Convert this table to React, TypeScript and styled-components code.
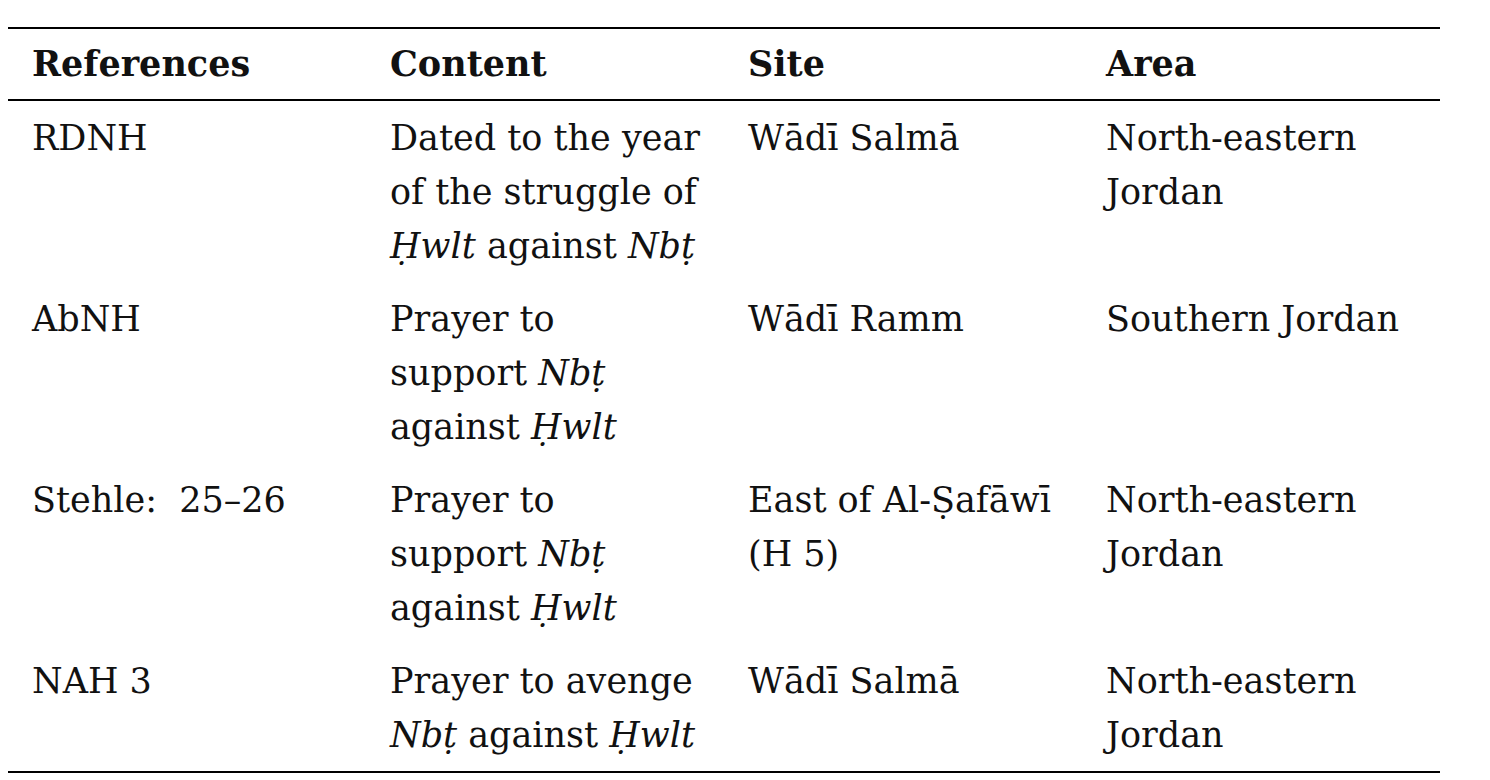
import React from "react";
import styled, { createGlobalStyle } from "styled-components";

const Global = createGlobalStyle`
  html, body { margin: 0; padding: 0; background: #fff; }
  body { font-family: "DejaVu Serif", "Liberation Serif", serif; color: #111; }
  *, *::before, *::after { box-sizing: border-box; }
`;

const Page = styled.div`
  padding: 27px 8px 0 8px;
`;

const Table = styled.table`
  width: 1432px;
  border-collapse: collapse;
  table-layout: fixed;
  border-top: 2px solid #000;
  border-bottom: 2px solid #000;
  font-size: 35px;
  line-height: 54px;
`;

const Col = styled.col`
  width: 358px;
`;

const HeadRow = styled.tr`
  border-bottom: 2px solid #000;
`;

const Th = styled.th`
  text-align: left;
  font-weight: bold;
  padding: 8px 0 8px 24px;
  vertical-align: top;
  white-space: nowrap;
`;

const Td = styled.td`
  padding: 10px 0 9px 24px;
  vertical-align: top;
  white-space: nowrap;
`;

const Tr = styled.tr``;

const I = styled.em`
  font-style: italic;
`;

type Row = { ref: React.ReactNode; content: React.ReactNode; site: React.ReactNode; area: React.ReactNode };

const rows: Row[] = [
  {
    ref: "RDNH",
    content: (
      <>
        Dated to the year
        <br />
        of the struggle of
        <br />
        <I>Ḥwlt</I> against <I>Nbṭ</I>
      </>
    ),
    site: "Wādī Salmā",
    area: (
      <>
        North-eastern
        <br />
        Jordan
      </>
    ),
  },
  {
    ref: "AbNH",
    content: (
      <>
        Prayer to
        <br />
        support <I>Nbṭ</I>
        <br />
        against <I>Ḥwlt</I>
      </>
    ),
    site: "Wādī Ramm",
    area: "Southern Jordan",
  },
  {
    ref: "Stehle:\u00a0 25–26",
    content: (
      <>
        Prayer to
        <br />
        support <I>Nbṭ</I>
        <br />
        against <I>Ḥwlt</I>
      </>
    ),
    site: (
      <>
        East of Al-Ṣafāwī
        <br />
        (H 5)
      </>
    ),
    area: (
      <>
        North-eastern
        <br />
        Jordan
      </>
    ),
  },
  {
    ref: "NAH 3",
    content: (
      <>
        Prayer to avenge
        <br />
        <I>Nbṭ</I> against <I>Ḥwlt</I>
      </>
    ),
    site: "Wādī Salmā",
    area: (
      <>
        North-eastern
        <br />
        Jordan
      </>
    ),
  },
];

export default function App() {
  return (
    <>
      <Global />
      <Page>
        <Table>
          <colgroup>
            <Col />
            <Col />
            <Col />
            <Col />
          </colgroup>
          <thead>
            <HeadRow>
              <Th>References</Th>
              <Th>Content</Th>
              <Th>Site</Th>
              <Th>Area</Th>
            </HeadRow>
          </thead>
          <tbody>
            {rows.map((r, i) => (
              <Tr key={i}>
                <Td>{r.ref}</Td>
                <Td>{r.content}</Td>
                <Td>{r.site}</Td>
                <Td>{r.area}</Td>
              </Tr>
            ))}
          </tbody>
        </Table>
      </Page>
    </>
  );
}
